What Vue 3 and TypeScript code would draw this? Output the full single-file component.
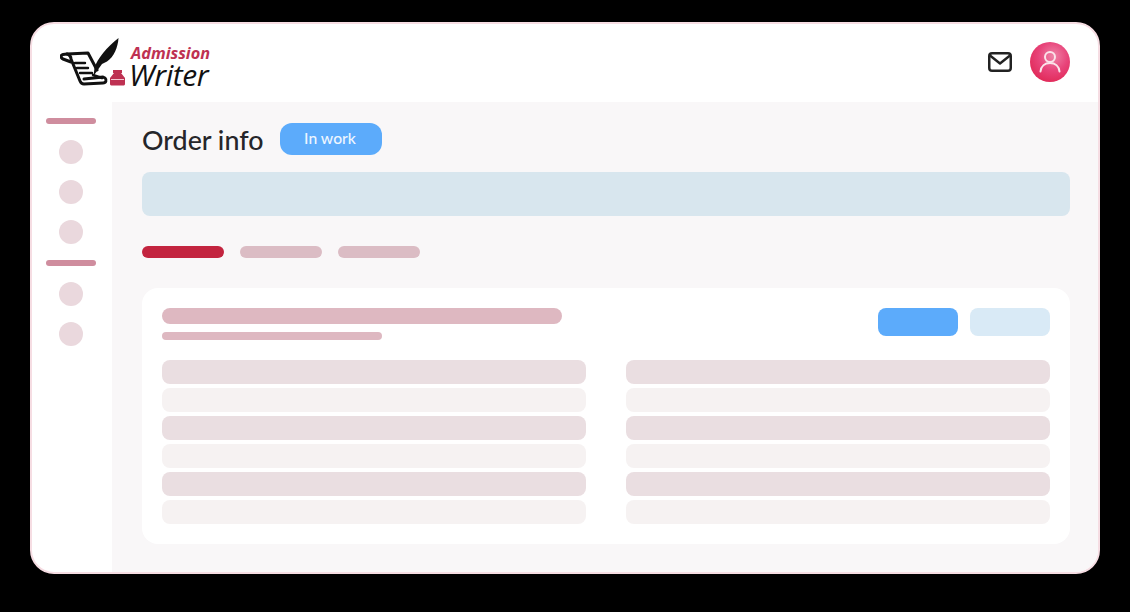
<script setup lang="ts">
const tabs = [true, false, false]
const rows = [0, 1, 2, 3, 4, 5]
const columns = [0, 1]
</script>

<template>
  <div class="page">
    <div class="window">
      <header class="topbar">
        <div class="logo">
          <svg class="logo-mark" width="72" height="52" viewBox="0 0 72 52" fill="none">
            <path d="M11 25 L3 22 C0.5 21 0.5 18 3 17.5 L7 17 L28 16 L37 33" stroke="#111" stroke-width="3" stroke-linecap="round" stroke-linejoin="round"/>
            <path d="M7 17 C10 18 11 20 11 22 L20 44 C21 46.5 22 47 24 47 L43 46 C46 46 47 43 45 41 L43 40 L24 42" stroke="#111" stroke-width="3" stroke-linecap="round" stroke-linejoin="round"/>
            <path d="M15 26 L25 26 M17 31 L28 31 M20 36 L32 36" stroke="#111" stroke-width="2.4" stroke-linecap="round"/>
            <path d="M33 38 L42 41" stroke="#111" stroke-width="2.4" stroke-linecap="round"/>
            <path d="M58.5 1 C58 10 54 20 47 24.5 L42 27 L37 34 L33.5 39 L34.5 31 C37 22 47 10 58.5 1 Z" fill="#111"/>
            <path d="M53 33 H62 V36 H61 L65 41 V47 C65 48 64 48.5 63 48.5 H52 C51 48.5 50 48 50 47 V41 L54 36 H53 Z" fill="#be3152"/>
            <path d="M51 42.5 H64" stroke="#f3c7d2" stroke-width="1.2"/>
          </svg>
          <div class="wordmark">
            <span class="word-top">Admission</span>
            <span class="word-bottom">Writer</span>
          </div>
        </div>
        <div class="top-actions">
          <svg width="24" height="20" viewBox="0 0 24 20" fill="none">
            <rect x="1.25" y="1.25" width="21.5" height="17.5" rx="2.8" stroke="#222" stroke-width="2.5"/>
            <path d="M2 3.5 L12 11.5 L22 3.5" stroke="#222" stroke-width="2.4" stroke-linejoin="round"/>
          </svg>
          <div class="avatar">
            <svg width="24" height="24" viewBox="0 0 24 24" fill="none">
              <circle cx="12" cy="7" r="5" stroke="#fbe4ea" stroke-width="2"/>
              <path d="M2.5 21.5 C3 16 7 13 12 13 C17 13 21 16 21.5 21.5" stroke="#fbe4ea" stroke-width="2" stroke-linecap="round"/>
            </svg>
          </div>
        </div>
      </header>

      <div class="body">
        <aside class="sidebar">
          <span class="side-bar"></span>
          <span class="dot"></span>
          <span class="dot"></span>
          <span class="dot"></span>
          <span class="side-bar"></span>
          <span class="dot"></span>
          <span class="dot"></span>
        </aside>

        <main class="content">
          <div class="title-row">
            <h1 class="title">Order info</h1>
            <span class="status">In work</span>
          </div>
          <div class="banner"></div>
          <div class="tabs">
            <span v-for="(active, i) in tabs" :key="i" class="tab" :class="{ active }"></span>
          </div>
          <section class="card">
            <div class="card-head">
              <div class="card-heading">
                <span class="head-line"></span>
                <span class="sub-line"></span>
              </div>
              <div class="buttons">
                <span class="btn primary"></span>
                <span class="btn secondary"></span>
              </div>
            </div>
            <div class="columns">
              <div v-for="c in columns" :key="c" class="column">
                <span v-for="r in rows" :key="r" class="row" :class="r % 2 === 0 ? 'dark' : 'light'"></span>
              </div>
            </div>
          </section>
        </main>
      </div>
    </div>
  </div>
</template>

<style>
html, body { margin: 0; background: #000; }
</style>

<style scoped>
.page {
  width: 1130px;
  height: 612px;
  box-sizing: border-box;
  padding: 22px 30px 38px;
  background: #000;
  overflow: hidden;
}
.window {
  height: 100%;
  box-sizing: border-box;
  display: flex;
  flex-direction: column;
  background: #fff;
  border: 2px solid #f6dde3;
  border-radius: 24px;
  overflow: hidden;
}
.topbar {
  flex: 0 0 78px;
  display: flex;
  align-items: center;
  justify-content: space-between;
  padding: 0 28px;
}
.logo {
  display: flex;
  align-items: flex-end;
  height: 52px;
  margin-top: 1px;
}
.logo-mark { margin: 0 -3px 1px 0; }
.wordmark {
  display: flex;
  flex-direction: column;
  font-family: "Open Sans", sans-serif;
  font-style: italic;
  padding-bottom: 1px;
}
.word-top {
  margin-left: 2px;
  font-size: 16.3px;
  line-height: 13px;
  font-weight: 700;
  color: #be3152;
}
.word-bottom {
  font-size: 30px;
  line-height: 29px;
  letter-spacing: -0.4px;
  color: #111;
  font-weight: 400;
}
.top-actions {
  display: flex;
  align-items: center;
  gap: 18px;
  margin-bottom: 2px;
}
.avatar {
  width: 40px;
  height: 40px;
  border-radius: 50%;
  display: flex;
  align-items: center;
  justify-content: center;
  background: radial-gradient(circle at 58% 35%, #ee84a8 0%, #e8447a 42%, #dc1a44 100%);
}
.body {
  flex: 1;
  display: flex;
  min-height: 0;
}
.sidebar {
  flex: 0 0 80px;
  box-sizing: border-box;
  padding: 16px 2px 0 0;
  display: flex;
  flex-direction: column;
  align-items: center;
}
.side-bar {
  width: 50px;
  height: 6px;
  border-radius: 3px;
  background: #cf8d9e;
  margin-bottom: 16px;
}
.dot {
  width: 24px;
  height: 24px;
  border-radius: 50%;
  background: #ead8dd;
  margin-bottom: 16px;
}
.content {
  flex: 1;
  min-width: 0;
  box-sizing: border-box;
  padding: 21px 28px 0 30px;
  background: #f9f7f8;
}
.title-row {
  display: flex;
  align-items: center;
  height: 32px;
  gap: 16px;
}
.title {
  width: 122px;
  margin: 2px 0 0;
  font-family: Lato, sans-serif;
  font-size: 26.8px;
  line-height: 32px;
  font-weight: 500;
  white-space: nowrap;
  color: #26262a;
}
.status {
  width: 102px;
  height: 32px;
  border-radius: 12px;
  background: #5cabfb;
  color: #eef6ff;
  display: flex;
  align-items: center;
  justify-content: center;
  padding: 0 2px 2px 0;
  box-sizing: border-box;
  font-family: Lato, sans-serif;
  font-size: 15.7px;
  font-weight: 500;
}
.banner {
  height: 44px;
  margin-top: 17px;
  border-radius: 8px;
  background: #d8e6ee;
}
.tabs {
  display: flex;
  gap: 16px;
  margin-top: 30px;
}
.tab {
  width: 82px;
  height: 12px;
  border-radius: 6px;
  background: #dbbcc4;
}
.tab.active { background: #c3243f; }
.card {
  margin-top: 30px;
  height: 256px;
  box-sizing: border-box;
  padding: 20px;
  border-radius: 16px;
  background: #fff;
}
.card-head {
  display: flex;
  justify-content: space-between;
  align-items: flex-start;
  height: 32px;
}
.card-heading {
  display: flex;
  flex-direction: column;
  gap: 8px;
}
.head-line {
  width: 400px;
  height: 16px;
  border-radius: 8px;
  background: #deb8c1;
}
.sub-line {
  width: 220px;
  height: 8px;
  border-radius: 4px;
  background: #deb8c1;
}
.buttons {
  display: flex;
  gap: 12px;
}
.btn {
  width: 80px;
  height: 28px;
  border-radius: 8px;
}
.btn.primary { background: #5cabfb; }
.btn.secondary { background: #d9eaf6; }
.columns {
  margin-top: 20px;
  display: grid;
  grid-template-columns: 424px 424px;
  column-gap: 40px;
}
.column {
  display: flex;
  flex-direction: column;
  gap: 4px;
}
.row {
  height: 24px;
  border-radius: 8px;
}
.row.dark { background: #eadee1; }
.row.light { background: #f6f2f2; }
</style>
